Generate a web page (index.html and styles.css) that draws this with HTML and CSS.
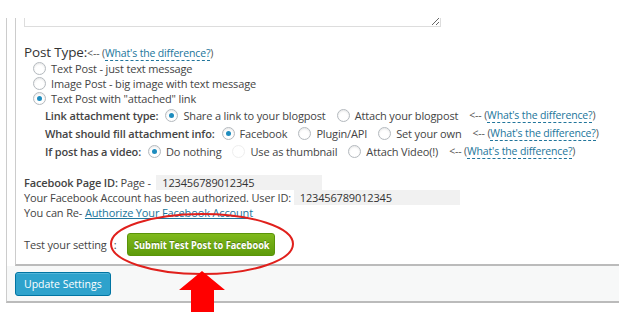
FILE: index.html
```html
<!DOCTYPE html>
<html lang="en">
<head>
    <meta charset="UTF-8">
    <title>Facebook Settings</title>
    <link rel="stylesheet" href="styles.css">
</head>
<body>
    <div class="wrap">
        <div class="box">
            <textarea class="msg"></textarea>

            <h3 class="post-type">Post Type:<span class="hint">&lt;-- (<a class="diff" href="#">What's the difference?</a>)</span></h3>
            <div class="types">
                <label class="opt"><span class="radio"></span>Text Post - just text message</label>
                <label class="opt"><span class="radio"></span>Image Post - big image with text message</label>
                <label class="opt"><span class="radio on"></span>Text Post with "attached" link</label>
            </div>

            <div class="sub">
                <div class="row">
                    <b>Link attachment type:</b>
                    <label class="opt"><span class="radio on"></span>Share a link to your blogpost</label>
                    <label class="opt"><span class="radio"></span>Attach your blogpost</label>
                    <span class="hint">&lt;-- (<a class="diff" href="#">What's the difference?</a>)</span>
                </div>
                <div class="row">
                    <b>What should fill attachment info:</b>
                    <label class="opt"><span class="radio on"></span>Facebook</label>
                    <label class="opt"><span class="radio"></span>Plugin/API</label>
                    <label class="opt"><span class="radio"></span>Set your own</label>
                    <span class="hint">&lt;-- (<a class="diff" href="#">What's the difference?</a>)</span>
                </div>
                <div class="row">
                    <b>If post has a video:</b>
                    <label class="opt"><span class="radio on"></span>Do nothing</label>
                    <label class="opt"><span class="radio off"></span>Use as thumbnail</label>
                    <label class="opt"><span class="radio"></span>Attach Video(!)</label>
                    <span class="hint">&lt;-- (<a class="diff" href="#">What's the difference?</a>)</span>
                </div>
            </div>

            <div class="info">
                <div class="line"><b>Facebook Page ID:</b>&nbsp;Page -&nbsp; <span class="field">123456789012345</span></div>
                <div class="line">Your Facebook Account has been authorized. User ID:&nbsp;<span class="field">123456789012345</span></div>
                <div class="line">You can Re- <a class="auth" href="#">Authorize Your Facebook Account</a></div>
            </div>

            <div class="test">
                <span>Test your setting<span class="colon">:</span></span>
                <button class="btn-test"><span>Submit Test Post to Facebook</span></button>
            </div>
        </div>
        <div class="actions">
            <button class="btn-update">Update Settings</button>
        </div>
    </div>

    <svg class="mark" width="619" height="329" viewBox="0 0 619 329">
        <ellipse cx="202" cy="244" rx="91" ry="30" fill="none" stroke="#e0201c" stroke-width="2"/>
        <polygon points="202,271 225,290 214,290 214,312 191,312 191,290 179,290" fill="#ff0000"/>
    </svg>
</body>
</html>
```

FILE: styles.css
```css
body {
    margin: 0;
    padding-top: 18px;
    background: #fff;
    font-family: "Open Sans", Arial, sans-serif;
    font-size: 11px;
    letter-spacing: -0.15px;
    color: #444;
}
b {
    font-weight: 600;
}
.wrap {
    margin-left: 6px;
    border-left: 1px solid #ccc;
    border-bottom: 2px solid #bbb;
}
.box {
    margin-left: 8px;
    border-left: 1px solid #ccc;
    border-bottom: 2px solid #bbb;
    padding: 0 0 8px 8px;
}
.msg {
    display: block;
    width: 415px;
    height: 8px;
    margin: 0;
    padding: 0;
    border: 1px solid #ddd;
    border-top: none;
    resize: both;
    box-sizing: content-box;
}
.post-type {
    margin: 18px 0 0;
    font-size: 13.5px;
    font-weight: normal;
    line-height: 15px;
    color: #333;
}
.hint {
    font-size: 10.5px;
    color: #555;
}
.diff {
    color: #21759b;
    text-decoration: none;
    border-bottom: 1px dashed #21759b;
}
.types {
    padding-left: 9px;
}
.types .opt {
    display: flex;
    align-items: center;
    height: 15px;
}
.opt {
    display: inline-flex;
    align-items: center;
    gap: 5px;
}
.radio {
    width: 11px;
    height: 11px;
    border: 1px solid #b4b9be;
    border-radius: 50%;
    background: #fff;
    box-shadow: inset 0 1px 2px rgba(0, 0, 0, 0.1);
    position: relative;
    flex: none;
}
.radio.on::after {
    content: "";
    position: absolute;
    left: 3px;
    top: 3px;
    width: 5px;
    height: 5px;
    border-radius: 50%;
    background: #1e8cbe;
}
.radio.off {
    border-color: #eee;
    box-shadow: none;
}
.sub {
    padding-left: 21px;
    margin-top: 0;
}
.row {
    display: flex;
    align-items: center;
    gap: 11px;
    height: 18px;
}
.row b {
    margin-right: -4px;
}
.info {
    margin-top: 15px;
}
.line {
    height: 15px;
    line-height: 15px;
}
.field {
    display: inline-block;
    width: 160px;
    padding-left: 6px;
    background: #f1f1f1;
    color: #333;
}
.auth {
    color: #21759b;
}
.test {
    display: flex;
    align-items: center;
    gap: 11px;
    margin-top: 13px;
}
.colon {
    margin-left: 7px;
}
.btn-test {
    width: 148px;
    height: 23px;
    padding: 0;
    display: flex;
    justify-content: center;
    align-items: center;
    white-space: nowrap;
    font-family: "Open Sans", Arial, sans-serif;
    font-size: 11px;
    font-weight: bold;
    color: #fff;
    background: linear-gradient(#7fb91c, #5e9b0b);
    border: 1px solid #5a9409;
    border-radius: 3px;
    text-shadow: 0 -1px 0 rgba(0, 0, 0, 0.3);
}
.btn-test span {
    display: inline-block;
    transform: scaleX(0.84);
}
.actions {
    background: #f7f8f8;
    height: 35px;
    display: flex;
    align-items: center;
    padding-left: 8px;
}
.btn-update {
    height: 24px;
    padding: 0 8px;
    font-family: "Open Sans", Arial, sans-serif;
    font-size: 10.5px;
    color: #fff;
    background: #2ea2cc;
    border: 1px solid #0074a2;
    border-radius: 3px;
    box-shadow: inset 0 1px 0 rgba(120, 200, 230, 0.5);
}
.mark {
    position: absolute;
    left: 0;
    top: 0;
    pointer-events: none;
}
```
